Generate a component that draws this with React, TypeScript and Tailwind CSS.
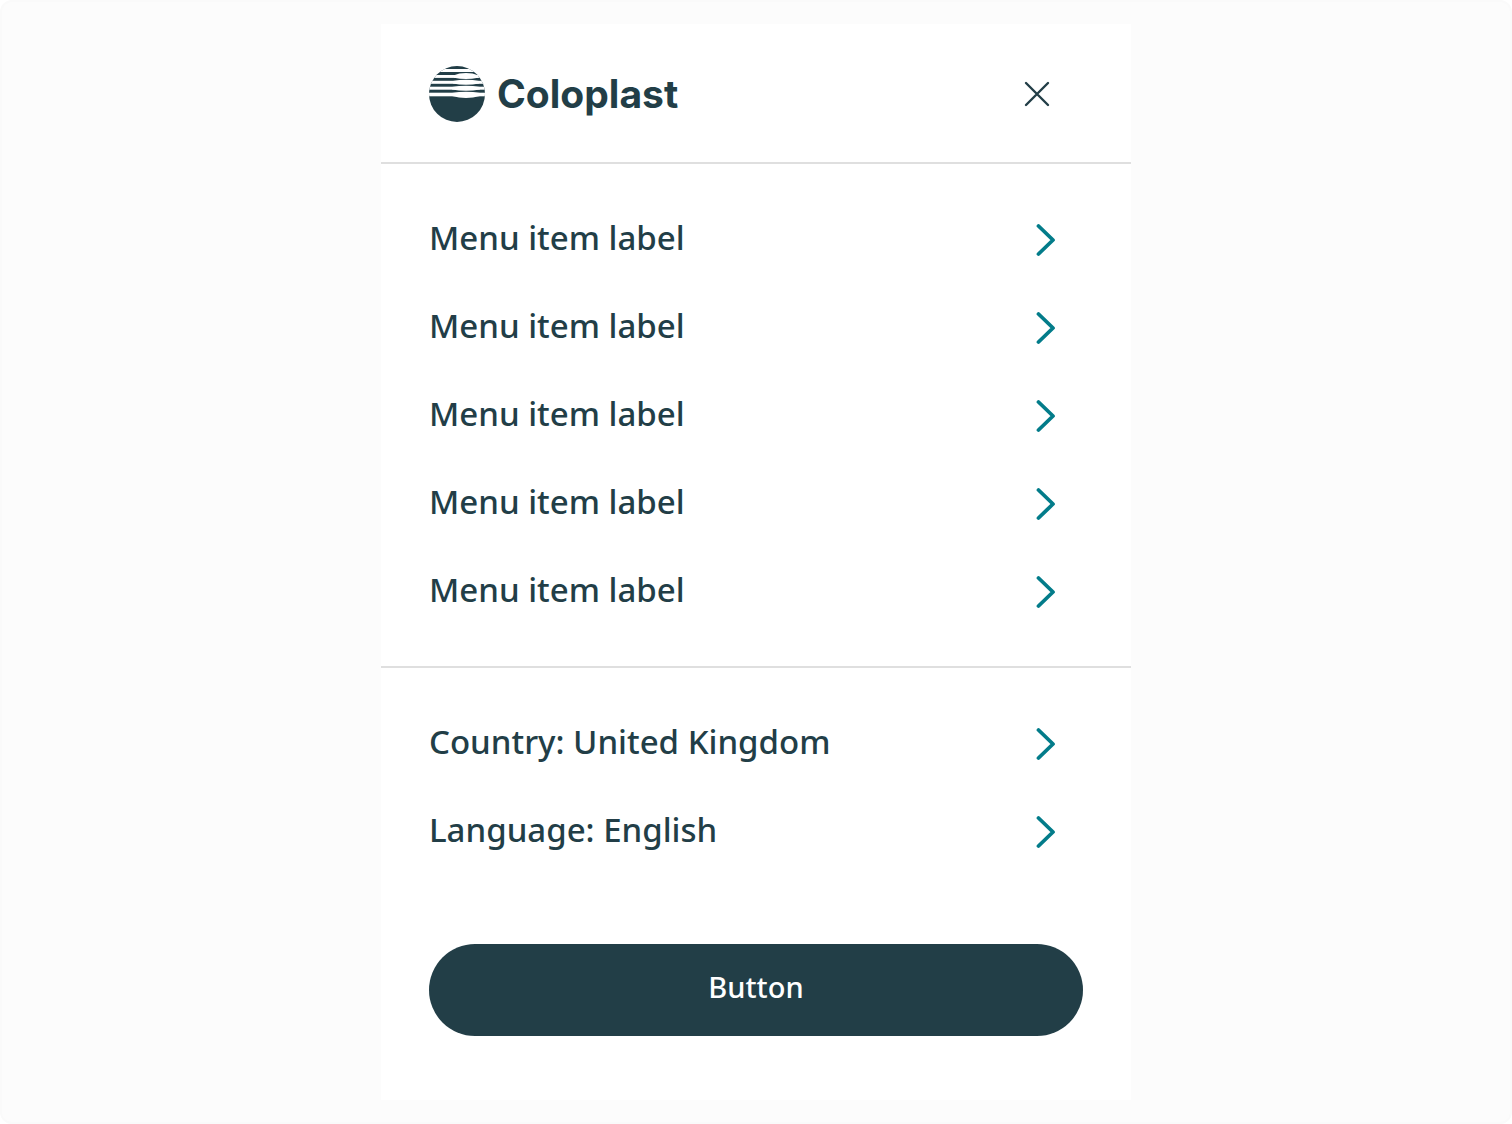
import React from 'react';

const menuItems = [1, 2, 3, 4, 5];
const settings = ['Country: United Kingdom', 'Language: English'];

function LogoMark() {
  return (
    <svg viewBox="0 0 56 56" className="size-14 shrink-0" aria-hidden="true">
      <defs>
        <clipPath id="disc">
          <circle cx="28" cy="28" r="28" />
        </clipPath>
      </defs>
      <g clipPath="url(#disc)">
        <rect width="56" height="56" fill="#223e47" />
        <g fill="#fff">
          <rect y="3" width="56" height="3" />
          <rect y="9" width="56" height="2.9" />
          <rect y="14.8" width="56" height="3" />
          <rect y="20.7" width="56" height="3" />
          <rect y="26.7" width="56" height="3.6" />
          <path d="M25 9.2Q30 7.1 37 7.1T49 9.2V11.7Q43 12.9 37 12.9T25 11.7Z" />
          <path d="M24 15Q30 13.7 37 13.7T50 15V17.6Q44 18.8 37 18.8T24 17.6Z" />
          <path d="M23 20.9Q30 19.7 37 19.7T51 20.9V23.5Q44 24.7 37 24.7T23 23.5Z" />
          <path d="M23 27Q30 25.7 37 25.7T51 27V30Q44 32 37 32T23 30Z" />
        </g>
      </g>
    </svg>
  );
}

function Row({ label }: { label: string }) {
  return (
    <li>
      <a href="#" className="flex h-22 items-center justify-between pr-[27px]">
        <span className="pb-1">{label}</span>
        <svg viewBox="0 0 20 34" className="h-[34px] w-5 shrink-0" fill="none" stroke="#037c8a" strokeWidth="3.8" strokeLinecap="round" strokeLinejoin="round" aria-hidden="true">
          <path d="M2.5 3L17 17L2.5 31" />
        </svg>
      </a>
    </li>
  );
}

export default function App() {
  return (
    <div className="flex min-h-screen justify-center rounded-xl border-2 border-[#fafafa] bg-[#fcfcfc] py-[22px] font-['Noto_Sans',sans-serif] text-[#223e47]">
      <main className="flex w-full max-w-[750px] flex-col bg-white">
        <header className="flex items-center justify-between border-b-2 border-[#dfdfdf] pt-[42px] pr-20 pb-10 pl-12">
          <a href="#" className="flex items-center gap-3">
            <LogoMark />
            <span className="font-['Inter',sans-serif] text-[39px] leading-14 font-bold">Coloplast</span>
          </a>
          <button type="button" aria-label="Close menu" className="flex size-7 items-center justify-center">
            <svg viewBox="0 0 28 28" className="size-7" fill="none" stroke="#223e47" strokeWidth="2.4" strokeLinecap="round" aria-hidden="true">
              <path d="M3 3L25 25M25 3L3 25" />
            </svg>
          </button>
        </header>
        <nav aria-label="Main menu" className="border-b-2 border-[#dfdfdf] px-12 pt-8 pb-[30px] text-[33px] font-medium">
          <ul>
            {menuItems.map((id) => (
              <Row key={id} label="Menu item label" />
            ))}
          </ul>
        </nav>
        <section aria-label="Settings" className="px-12 pt-8 pb-16">
          <ul className="text-[33px] font-medium">
            {settings.map((label) => (
              <Row key={label} label={label} />
            ))}
          </ul>
          <button type="button" className="mt-17 flex h-23 w-full items-center justify-center rounded-full bg-[#223e47] pb-1.5 text-[29px] font-medium text-white">
            Button
          </button>
        </section>
      </main>
    </div>
  );
}
